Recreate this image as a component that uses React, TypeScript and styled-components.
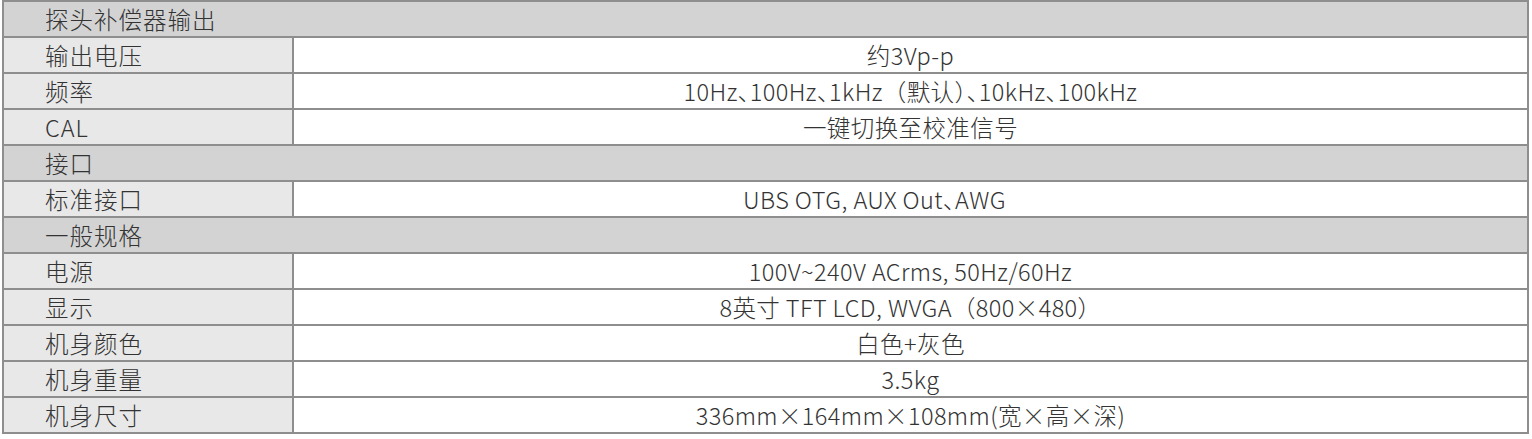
import React from "react";
import styled, { createGlobalStyle } from "styled-components";

interface SpecRow {
  label: string;
  value?: string;
  section?: boolean;
  shift?: number;
}

const rows: SpecRow[] = [
  { label: "探头补偿器输出", section: true },
  { label: "输出电压", value: "约3Vp-p" },
  { label: "频率", value: "10Hz、100Hz、1kHz（默认）、10kHz、100kHz" },
  { label: "CAL", value: "一键切换至校准信号" },
  { label: "接口", section: true },
  { label: "标准接口", value: "UBS OTG, AUX Out、AWG", shift: 72 },
  { label: "一般规格", section: true },
  { label: "电源", value: "100V~240V ACrms, 50Hz/60Hz" },
  { label: "显示", value: "8英寸 TFT LCD, WVGA（800×480）" },
  { label: "机身颜色", value: "白色+灰色" },
  { label: "机身重量", value: "3.5kg" },
  { label: "机身尺寸", value: "336mm×164mm×108mm(宽×高×深)" },
];

// full-width brackets keep their normal width, the rest is set proportional
const renderValue = (text: string) =>
  text.split(/([（）])/).map((part, i) =>
    part === "（" || part === "）" ? (
      <Bracket key={i}>{part}</Bracket>
    ) : (
      <React.Fragment key={i}>{part}</React.Fragment>
    )
  );

const GlobalStyle = createGlobalStyle`
  html, body {
    margin: 0;
    padding: 0;
    background: #ffffff;
  }
  body {
    font-family: "Noto Sans CJK SC", "Noto Sans", sans-serif;
    color: #333333;
  }
`;

const App = () => {
  return (
    <>
      <GlobalStyle />
      <Page>
        <SpecTable>
          <colgroup>
            <col style={{ width: 290 }} />
            <col />
          </colgroup>
          <tbody>
            <StubRow>
              <LabelCell />
              <ValueCell />
            </StubRow>
            {rows.map((row) =>
              row.section ? (
                <Row key={row.label}>
                  <SectionCell colSpan={2}>{row.label}</SectionCell>
                </Row>
              ) : (
                <Row key={row.label}>
                  <LabelCell>{row.label}</LabelCell>
                  <ValueCell $shift={row.shift ?? 0}>
                    {renderValue(row.value ?? "")}
                  </ValueCell>
                </Row>
              )
            )}
          </tbody>
        </SpecTable>
      </Page>
    </>
  );
};

export default App;

const Page = styled.div`
  width: 1532px;
  height: 439px;
  overflow: hidden;
  padding-left: 2px;
  box-sizing: border-box;
`;

const SpecTable = styled.table`
  width: 1527px;
  table-layout: fixed;
  border-collapse: collapse;
  font-size: 23.5px;
  font-weight: 300;
`;

const Row = styled.tr`
  height: 36px;
`;

const StubRow = styled.tr`
  height: 1px;
  td {
    height: 0;
    padding: 0;
    border-top: none;
  }
`;

const Cell = styled.td`
  border: 2px solid #8e8e8e;
  padding: 0;
  line-height: 32px;
  white-space: nowrap;
`;

const LabelCell = styled(Cell)`
  background: #e8e8e8;
  padding-left: 41px;
  text-align: left;
  letter-spacing: 1px;
`;

const ValueCell = styled(Cell)<{ $shift?: number }>`
  background: #ffffff;
  text-align: center;
  letter-spacing: 0.4px;
  font-feature-settings: "palt";
  padding-right: ${({ $shift }) => $shift ?? 0}px;
`;

const Bracket = styled.span`
  font-feature-settings: normal;
`;

const SectionCell = styled(Cell)`
  background: #d3d3d3;
  padding-left: 41px;
  text-align: left;
  letter-spacing: 1px;
`;
